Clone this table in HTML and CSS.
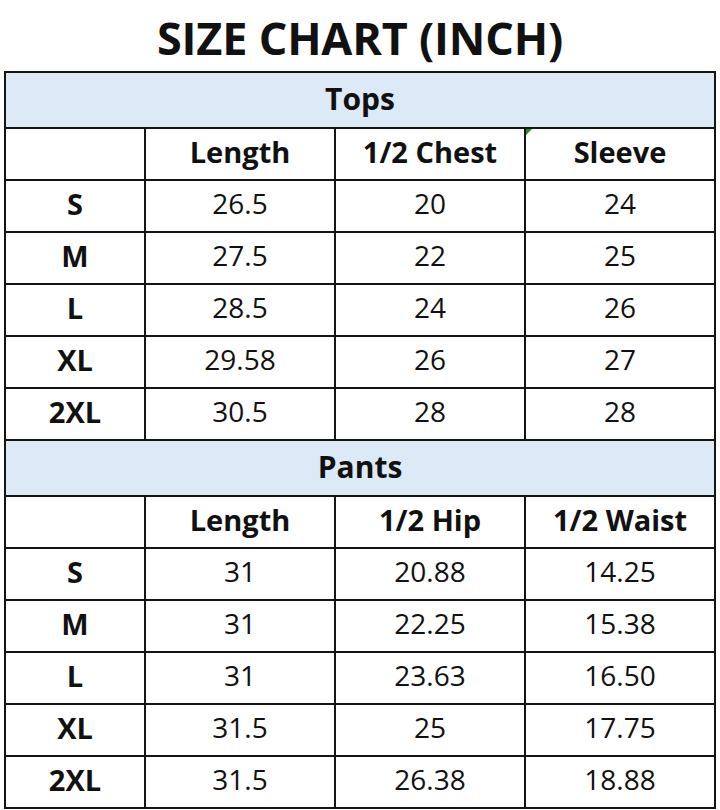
FILE: index.html
```html
<!DOCTYPE html>
<html>
<head>
<meta charset="utf-8">
<link rel="stylesheet" href="styles.css">
</head>
<body>
<h1 class="title">SIZE CHART (INCH)</h1>
<table class="chart">
  <colgroup>
    <col class="c-size"><col class="c-val"><col class="c-val"><col class="c-val">
  </colgroup>
  <tr class="band"><td colspan="4">Tops</td></tr>
  <tr class="head"><td></td><td>Length</td><td>1/2 Chest</td><td class="flag">Sleeve</td></tr>
  <tr><td class="size">S</td><td>26.5</td><td>20</td><td>24</td></tr>
  <tr><td class="size">M</td><td>27.5</td><td>22</td><td>25</td></tr>
  <tr><td class="size">L</td><td>28.5</td><td>24</td><td>26</td></tr>
  <tr><td class="size">XL</td><td>29.58</td><td>26</td><td>27</td></tr>
  <tr><td class="size">2XL</td><td>30.5</td><td>28</td><td>28</td></tr>
  <tr class="band"><td colspan="4">Pants</td></tr>
  <tr class="head"><td></td><td>Length</td><td>1/2 Hip</td><td>1/2 Waist</td></tr>
  <tr><td class="size">S</td><td>31</td><td>20.88</td><td>14.25</td></tr>
  <tr><td class="size">M</td><td>31</td><td>22.25</td><td>15.38</td></tr>
  <tr><td class="size">L</td><td>31</td><td>23.63</td><td>16.50</td></tr>
  <tr><td class="size">XL</td><td>31.5</td><td>25</td><td>17.75</td></tr>
  <tr><td class="size">2XL</td><td>31.5</td><td>26.38</td><td>18.88</td></tr>
</table>
</body>
</html>
```
FILE: styles.css
```css
html, body {
  margin: 0;
  padding: 0;
  background: #fff;
  color: #111;
  font-family: "Open Sans", "Noto Sans", sans-serif;
}
.title {
  margin: 0;
  padding-top: 6px;
  height: 65px;
  line-height: 64px;
  font-size: 45px;
  font-weight: 700;
  text-align: center;
  letter-spacing: -0.2px;
}
.chart {
  margin-left: 4px;
  width: 712px;
  border-collapse: collapse;
  table-layout: fixed;
}
.c-size { width: 140px; }
.c-val { width: 190px; }
.chart td {
  border: 2px solid #141414;
  text-align: center;
  vertical-align: middle;
  padding: 0 0 5px 0;
  line-height: 1.1;
  font-size: 28px;
  font-weight: 400;
}
.chart tr { height: 52px; }
.chart tr.band { height: 56px; }
.chart tr.band td {
  background: #dce9f6;
  font-size: 30px;
  font-weight: 700;
  padding-bottom: 4px;
}
.chart tr.head td {
  font-size: 29px;
  font-weight: 700;
}
.chart td.size {
  font-size: 29px;
  font-weight: 700;
}
.chart td.flag { position: relative; }
.chart td.flag::before {
  content: "";
  position: absolute;
  left: 0;
  top: 0;
  width: 0;
  height: 0;
  border-top: 6px solid #1f8f2f;
  border-right: 6px solid transparent;
}
```
